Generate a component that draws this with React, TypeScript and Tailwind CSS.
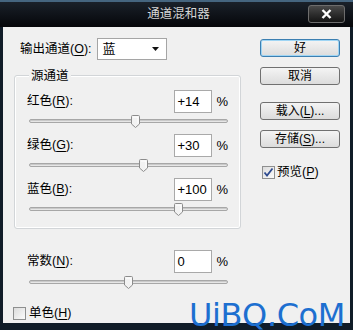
import { type ReactNode } from 'react';

type Channel = { label: string; key: string; value: string; pos: number };

const channels: Channel[] = [
    { label: '红色', key: 'R', value: '+14', pos: 106 },
    { label: '绿色', key: 'G', value: '+30', pos: 114 },
    { label: '蓝色', key: 'B', value: '+100', pos: 149 },
];

const Mnemonic = ({ text, k }: { text: string; k: string }) => (
    <span className="whitespace-nowrap">
        {text}(<span className="underline underline-offset-2">{k}</span>):
    </span>
);

const Slider = ({ pos }: { pos: number }) => (
    <div className="relative h-[14px] w-[199px] flex items-center">
        <div className="w-full h-[4px] rounded-full border border-[#a7a7a7] bg-[#e6e6e6] shadow-[inset_0_1px_0_#c9c9c9]" />
        <svg className="absolute top-[1px]" style={{ left: pos - 4 }} width="9" height="13" viewBox="0 0 9 13">
            <path d="M1.5 0.5 H7.5 Q8.5 0.5 8.5 1.5 V9 L4.5 12.5 L0.5 9 V1.5 Q0.5 0.5 1.5 0.5 Z" fill="#f2f2f2" stroke="#8c8c8c" />
            <path d="M2 2 H7 V8.5" fill="none" stroke="#ffffff" />
        </svg>
    </div>
);

const ValueRow = ({ label, value }: { label: ReactNode; value: string }) => (
    <div className="flex items-center h-[23px] w-[199px]">
        <div className="-ml-[2px] text-[12.5px] text-black">{label}</div>
        <div className="ml-auto w-[38px] h-[23px] border border-[#a9a9a9] bg-white flex items-center pl-[2px] text-[13px] text-black">
            {value}
        </div>
        <span className="ml-[4px] text-[13px] text-black">%</span>
    </div>
);

const Button = ({ children, primary }: { children: ReactNode; primary?: boolean }) => (
    <div
        className={`w-[80px] h-[18px] rounded-[3px] border flex items-center justify-center text-[12px] text-black bg-gradient-to-b from-[#f4f4f4] to-[#dcdcdc] ${primary ? 'border-[#3c7fb1] shadow-[0_0_0_1px_#9fd5f4_inset]' : 'border-[#707070]'}`}
    >
        {children}
    </div>
);

const CheckBox = ({ checked }: { checked?: boolean }) => (
    <div className="w-[13px] h-[13px] border border-[#8e8f8f] bg-gradient-to-br from-[#dcdcdc] to-[#fbfbfb] flex items-center justify-center">
        {checked && (
            <svg width="11" height="11" viewBox="0 0 11 11">
                <path d="M1.5 5.5 L4 8.5 L9.5 1.5" fill="none" stroke="#2d4a8f" strokeWidth="1.8" />
            </svg>
        )}
    </div>
);

export default function App() {
    return (
        <div className="relative w-[353px] h-[330px] overflow-hidden bg-[#101c28] font-['Liberation_Sans','Noto_Sans_CJK_SC',sans-serif]">
            {/* title bar */}
            <div className="h-[27px] border-t-2 border-[#45657f] bg-gradient-to-b from-[#1a212a] to-[#06070a] flex items-center relative">
                <div className="flex-1 text-center text-[12.5px] text-[#d6d6d6] pl-[4px]">通道混和器</div>
                <div className="absolute right-[8px] top-[3px] w-[37px] h-[18px] rounded-[3px] border border-[#6d6d6d] bg-gradient-to-b from-[#4a4a4a] to-[#151515] flex items-center justify-center">
                    <svg width="11" height="10" viewBox="0 0 11 10">
                        <path d="M1.5 1 L9.5 9 M9.5 1 L1.5 9" stroke="#ffffff" strokeWidth="2.4" />
                    </svg>
                </div>
            </div>

            {/* body */}
            <div className="mx-[3px] h-[296px] bg-[#f0f0f0] flex">
                <div className="w-[250px] shrink-0">
                    <div className="flex items-center h-[22px] mt-[11px] ml-[17px]">
                        <span className="text-[12.5px] text-black"><Mnemonic text="输出通道" k="O" /></span>
                        <div className="ml-[5px] w-[70px] h-[22px] border border-[#a5a5a5] bg-white flex items-center pl-[5px] pr-[7px] text-[13px] text-black">
                            <span>蓝</span>
                            <svg className="ml-auto" width="7" height="4" viewBox="0 0 7 4">
                                <path d="M0 0 H7 L3.5 4 Z" fill="#111" />
                            </svg>
                        </div>
                    </div>

                    <div className="relative mt-[15px] ml-[11px] w-[227px] h-[154px] rounded-[3px] border border-[#d2d5d8] shadow-[inset_0_0_0_1px_#ffffff] pt-[14px] pl-[14px]">
                        <span className="absolute -top-[9px] left-[14px] px-[2px] bg-[#f0f0f0] text-[12.5px] text-black">源通道</span>
                        {channels.map((c) => (
                            <div key={c.key} className="h-[44px]">
                                <ValueRow label={<Mnemonic text={c.label} k={c.key} />} value={c.value} />
                                <div className="mt-[1px]">
                                    <Slider pos={c.pos} />
                                </div>
                            </div>
                        ))}
                    </div>

                    <div className="ml-[26px] mt-[21px]">
                        <ValueRow label={<Mnemonic text="常数" k="N" />} value="0" />
                        <div className="mt-[2px]">
                            <Slider pos={99} />
                        </div>
                    </div>

                    <div className="ml-[10px] mt-[15px] flex items-center gap-[3px] text-[12.5px] text-black">
                        <CheckBox />
                        <span>单色(<span className="underline underline-offset-2">H</span>)</span>
                    </div>
                </div>

                <div className="pl-[7px] pt-[12px] flex flex-col">
                    <Button primary>好</Button>
                    <div className="mt-[10px]"><Button>取消</Button></div>
                    <div className="mt-[17px]"><Button>载入(<span className="underline underline-offset-2">L</span>)...</Button></div>
                    <div className="mt-[10px]"><Button>存储(<span className="underline underline-offset-2">S</span>)...</Button></div>
                    <div className="mt-[15px] ml-[2px] flex items-center gap-[2px] text-[12.5px] text-black">
                        <CheckBox checked />
                        <span>预览(<span className="underline underline-offset-2">P</span>)</span>
                    </div>
                </div>
            </div>

            {/* watermark */}
            <div className="absolute right-[8px] bottom-[2px] h-[26px] text-[32px] leading-[26px] text-[#1d6fd0] font-['DejaVu_Sans',sans-serif] tracking-[-0.4px]">
                UiBQ.CoM
            </div>
        </div>
    );
}
